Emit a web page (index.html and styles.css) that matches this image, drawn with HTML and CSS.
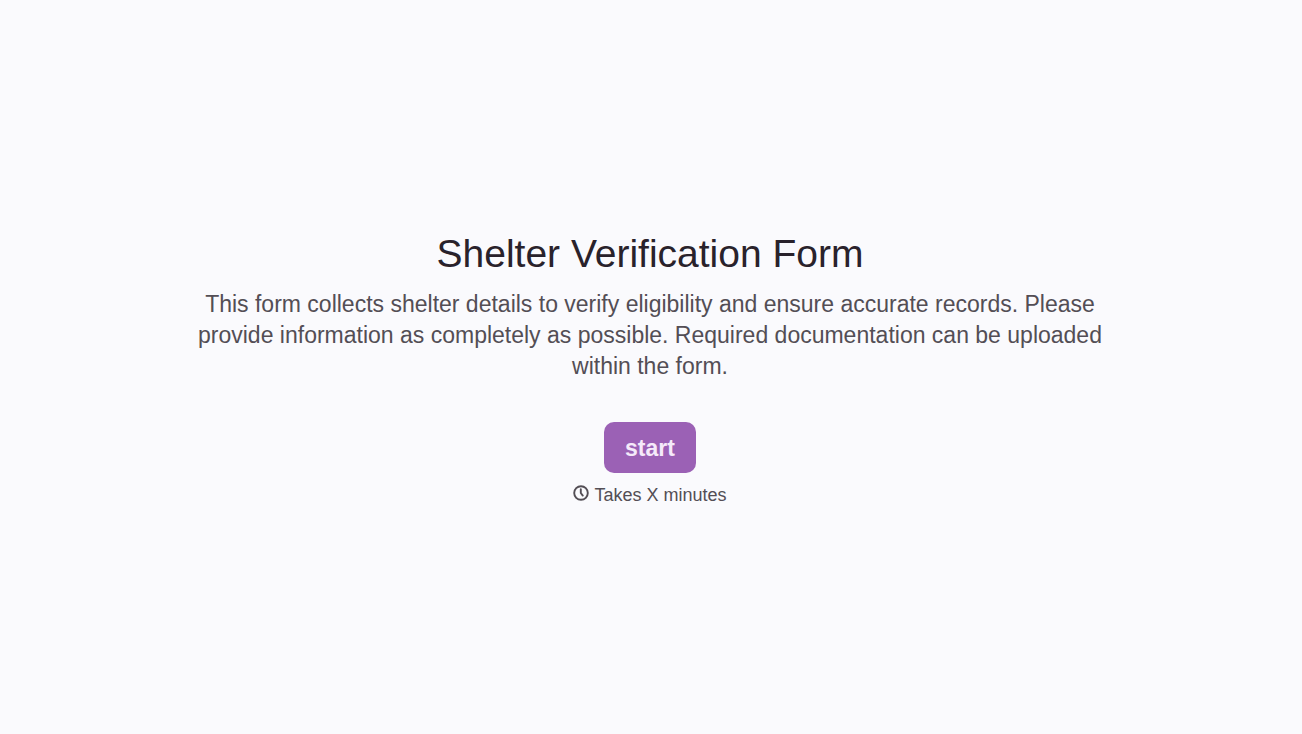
FILE: index.html
```html
<!DOCTYPE html>
<html lang="en">
<head>
<meta charset="utf-8">
<meta name="viewport" content="width=device-width, initial-scale=1">
<title>Shelter Verification Form</title>
<link rel="stylesheet" href="styles.css">
</head>
<body>
<main class="welcome">
  <h1 class="title">Shelter Verification Form</h1>
  <p class="description">This form collects shelter details to verify eligibility and ensure accurate records. Please provide information as completely as possible. Required documentation can be uploaded within the form.</p>
  <button class="start" type="button">start</button>
  <p class="duration">
    <svg class="clock" viewBox="0 0 16 16" aria-hidden="true"><circle cx="8" cy="8" r="6.8"/><path d="M7.8 4.2V8l2 2.6"/></svg>
    <span>Takes X minutes</span>
  </p>
</main>
</body>
</html>
```
FILE: styles.css
```css
* {
  box-sizing: border-box;
}

body {
  margin: 0;
  background: #fafafd;
  font-family: "Liberation Sans", Arial, sans-serif;
}

.welcome {
  display: flex;
  flex-direction: column;
  align-items: center;
  justify-content: center;
  min-height: 100vh;
  padding: 2px 24px 0 22px;
  text-align: center;
}

.title {
  margin: 0 0 11px;
  font-size: 39px;
  line-height: 48px;
  font-weight: 400;
  color: #29222b;
}

.description {
  max-width: 930px;
  margin: 0;
  font-size: 23px;
  line-height: 31px;
  color: #534e55;
}

.start {
  margin: 40px 0 0;
  padding: 2px 21px 0;
  height: 51px;
  border: 0;
  border-radius: 10px;
  background: #9b61b5;
  color: #f5eafa;
  font: 700 23px "Liberation Sans", Arial, sans-serif;
  cursor: pointer;
}

.duration {
  display: flex;
  align-items: flex-start;
  gap: 5px;
  margin: 11px 0 0;
  font-size: 18px;
  line-height: 22px;
  color: #534e55;
}

.clock {
  width: 16px;
  height: 16px;
  margin-top: 1px;
  fill: none;
  stroke: currentColor;
  stroke-width: 1.9;
  stroke-linecap: round;
}
```
